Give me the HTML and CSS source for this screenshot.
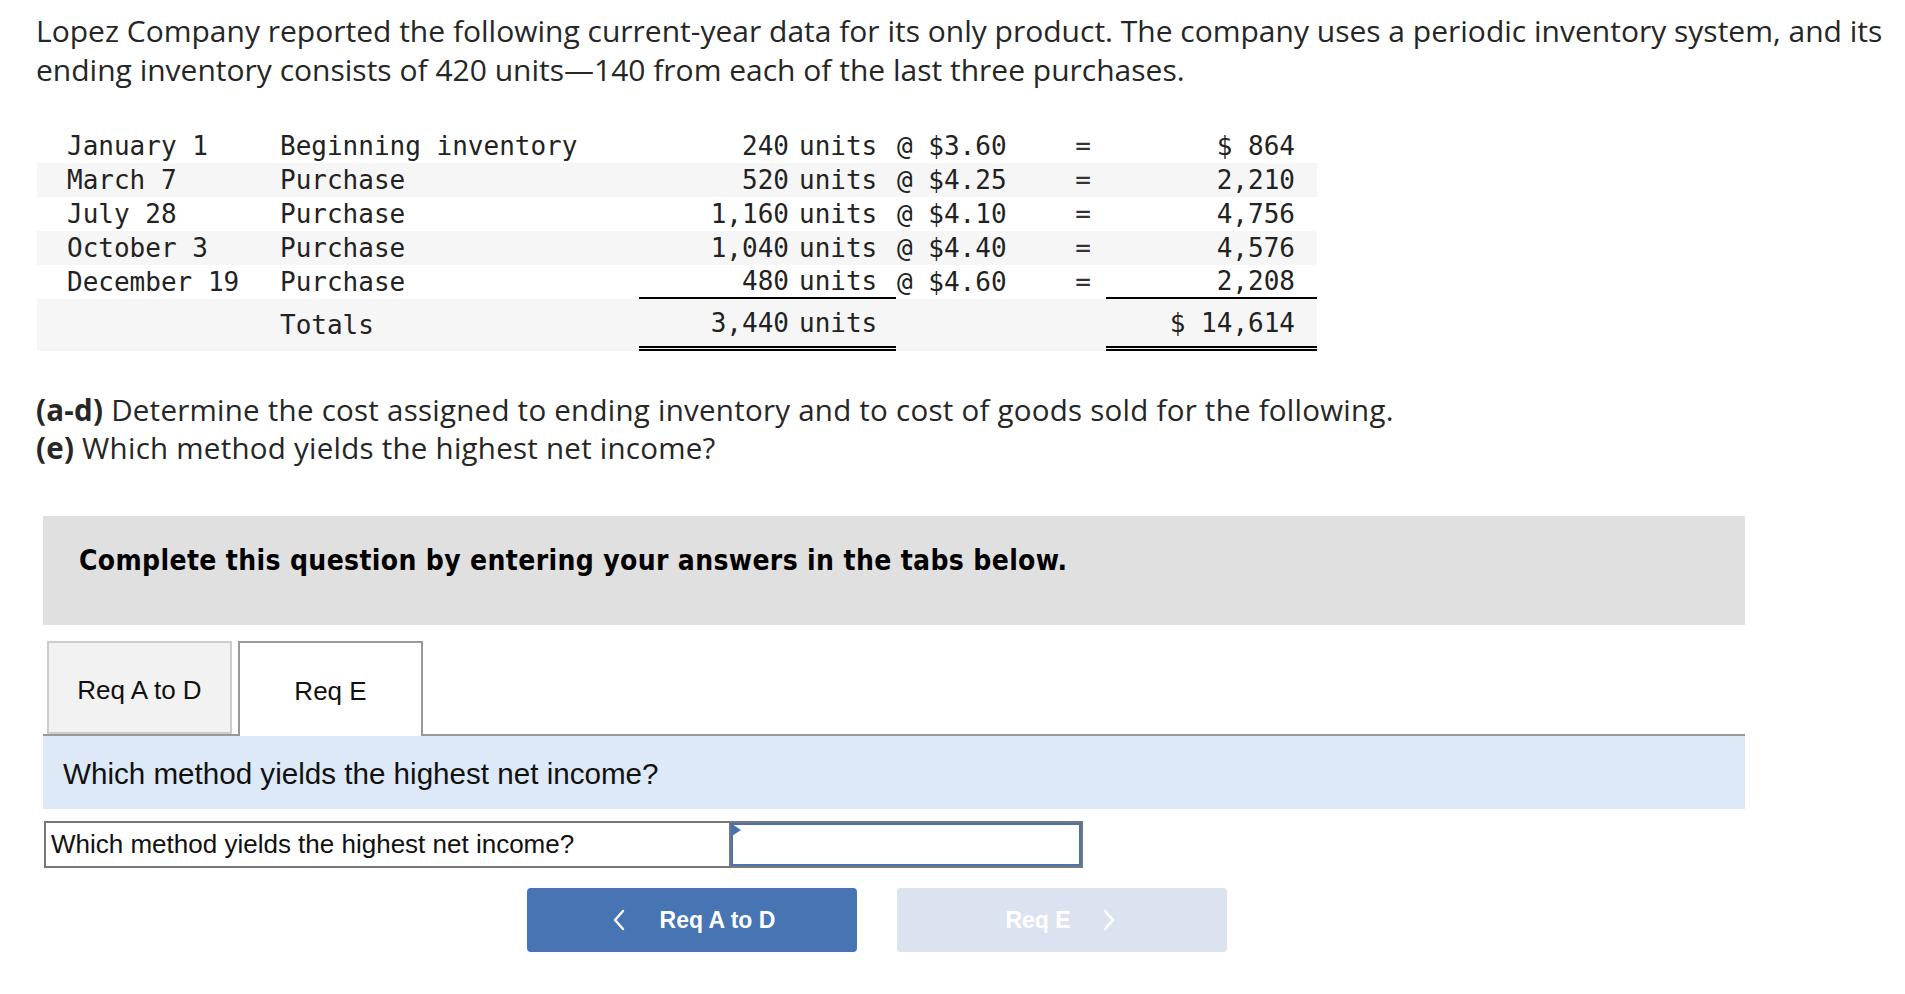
FILE: index.html
```html
<!DOCTYPE html>
<html lang="en">
<head>
<meta charset="utf-8">
<title>Lopez Company</title>
<link rel="stylesheet" href="styles.css">
</head>
<body>
<div class="page">
  <p class="intro">Lopez Company reported the following current-year data for its only product. The company uses a periodic inventory system, and its ending inventory consists of 420 units—140 from each of the last three purchases.</p>

  <table class="inv">
    <colgroup>
      <col class="c-date"><col class="c-desc"><col class="c-qty"><col class="c-uw"><col class="c-at"><col class="c-eq"><col class="c-amt">
    </colgroup>
    <tr>
      <td class="date">January 1</td><td class="desc">Beginning inventory</td><td class="qty">240</td><td class="uw">units</td><td class="at">@ $3.60</td><td class="eq">=</td><td class="amt">$ 864</td>
    </tr>
    <tr class="stripe">
      <td class="date">March 7</td><td class="desc">Purchase</td><td class="qty">520</td><td class="uw">units</td><td class="at">@ $4.25</td><td class="eq">=</td><td class="amt">2,210</td>
    </tr>
    <tr>
      <td class="date">July 28</td><td class="desc">Purchase</td><td class="qty">1,160</td><td class="uw">units</td><td class="at">@ $4.10</td><td class="eq">=</td><td class="amt">4,756</td>
    </tr>
    <tr class="stripe">
      <td class="date">October 3</td><td class="desc">Purchase</td><td class="qty">1,040</td><td class="uw">units</td><td class="at">@ $4.40</td><td class="eq">=</td><td class="amt">4,576</td>
    </tr>
    <tr class="last">
      <td class="date">December 19</td><td class="desc">Purchase</td><td class="qty line">480</td><td class="uw line">units</td><td class="at">@ $4.60</td><td class="eq">=</td><td class="amt line">2,208</td>
    </tr>
    <tr class="stripe total">
      <td class="date"></td><td class="desc">Totals</td><td class="qty dbl">3,440</td><td class="uw dbl">units</td><td class="at"></td><td class="eq"></td><td class="amt dbl">$ 14,614</td>
    </tr>
  </table>

  <p class="task"><b>(a-d)</b> Determine the cost assigned to ending inventory and to cost of goods sold for the following.<br><b>(e)</b> Which method yields the highest net income?</p>

  <div class="notice">Complete this question by entering your answers in the tabs below.</div>

  <div class="tabs">
    <div class="tab">Req A to D</div>
    <div class="tab active">Req E</div>
  </div>

  <div class="panel">Which method yields the highest net income?</div>

  <div class="answer">
    <div class="question">Which method yields the highest net income?</div>
    <div class="input"></div>
  </div>

  <div class="nav">
    <button class="btn prev" type="button">
      <svg class="chev" width="12" height="22" viewBox="0 0 12 22"><polyline points="10,2 2,11 10,20" fill="none" stroke="#fff" stroke-width="2.4" stroke-linecap="round" stroke-linejoin="round"/></svg>
      <span>Req A to D</span>
    </button>
    <button class="btn next" type="button">
      <span>Req E</span>
      <svg class="chev" width="12" height="22" viewBox="0 0 12 22"><polyline points="2,2 10,11 2,20" fill="none" stroke="#fff" stroke-width="2.4" stroke-linecap="round" stroke-linejoin="round"/></svg>
    </button>
  </div>
</div>
</body>
</html>
```

FILE: styles.css
```css
* { box-sizing: border-box; }

body {
  margin: 0;
  background: #fff;
  color: #222;
}

.page {
  padding: 11px 0 40px 36px;
}

.intro {
  margin: 0;
  width: 1866px;
  font-family: "Open Sans", sans-serif;
  font-size: 30px;
  line-height: 39px;
  color: #262626;
}

/* inventory table */
.inv {
  margin-top: 40px;
  margin-left: 1px;
  width: 1280px;
  table-layout: fixed;
  border-collapse: separate;
  border-spacing: 0;
  font-family: "DejaVu Sans Mono", monospace;
  font-size: 26px;
  color: #222;
}

.c-date { width: 243px; }
.c-desc { width: 359px; }
.c-qty { width: 150px; }
.c-uw { width: 107px; }
.c-at { width: 164px; }
.c-eq { width: 46px; }
.c-amt { width: 211px; }

.inv td {
  height: 34px;
  padding: 0;
  white-space: nowrap;
  vertical-align: middle;
  line-height: 30px;
}

.inv .stripe { background: #f6f6f6; }

.inv .date { padding-left: 30px; }
.inv .qty { text-align: right; }
.inv .uw { padding-left: 10px; }
.inv .at { padding-left: 1px; }
.inv .eq { text-align: center; color: #333; }
.inv .amt { text-align: right; padding-right: 22px; }

.inv .line { border-bottom: 2px solid #000; }

.inv .total td { height: 52px; }
.inv .dbl { border-bottom: 5px double #000; }

/* task */
.task {
  margin: 40px 0 0;
  font-family: "Open Sans", sans-serif;
  font-size: 29.5px;
  letter-spacing: 0.25px;
  line-height: 38px;
  color: #262626;
}

.notice {
  margin: 49px 0 0 7px;
  width: 1702px;
  height: 109px;
  padding: 28px 0 0 36px;
  background: #e0e0e0;
  font-family: "DejaVu Sans", sans-serif;
  font-stretch: condensed;
  font-weight: bold;
  font-size: 28px;
  letter-spacing: 0.35px;
  line-height: 34px;
  color: #000;
}

/* tabs */
.tabs {
  margin: 16px 0 0 7px;
  width: 1702px;
  display: flex;
  gap: 6px;
  padding-left: 4px;
  border-bottom: 2px solid #999;
}

.tab {
  width: 185px;
  height: 93px;
  display: flex;
  align-items: center;
  justify-content: center;
  padding-top: 5px;
  background: #f2f2f2;
  border: 2px solid #ccc;
  font-family: "Liberation Sans", Arial, sans-serif;
  font-size: 26px;
  color: #111;
}

.tab.active {
  background: #fff;
  border-color: #999;
  border-bottom: none;
  margin-bottom: -2px;
  height: 95px;
  padding-top: 3px;
}

.panel {
  margin-left: 7px;
  width: 1702px;
  height: 73px;
  padding: 3px 0 0 20px;
  display: flex;
  align-items: center;
  background: #dde9f7;
  font-family: "Liberation Sans", Arial, sans-serif;
  font-size: 29.6px;
  color: #111;
}

/* answer row */
.answer {
  margin: 12px 0 0 8px;
  width: 1039px;
  height: 47px;
  display: flex;
  border: 2px solid #777;
}

.question {
  width: 685px;
  padding-left: 5px;
  display: flex;
  align-items: center;
  border-right: 2px solid #777;
  font-family: "Liberation Sans", Arial, sans-serif;
  font-size: 26px;
  color: #111;
}

.input {
  position: relative;
  flex: 1;
  border: 2px solid #4a72b0;
  background: #fff;
}

.input::before {
  content: "";
  position: absolute;
  left: -1px;
  top: -1px;
  border-left: 9px solid #4a72b0;
  border-top: 6px solid transparent;
  border-bottom: 6px solid transparent;
}

/* nav buttons */
.nav {
  margin: 20px 0 0 491px;
  display: flex;
  gap: 40px;
}

.btn {
  width: 330px;
  height: 64px;
  border: none;
  border-radius: 4px;
  display: flex;
  align-items: center;
  justify-content: center;
  gap: 35px;
  font-family: "Liberation Sans", Arial, sans-serif;
  font-weight: bold;
  font-size: 23px;
  color: #fff;
  padding: 0;
}

.btn.prev { background: #4774b3; padding-left: 4px; }
.btn.next { background: #dae3ef; gap: 32px; padding-right: 4px; }

.chev { display: block; }
```
